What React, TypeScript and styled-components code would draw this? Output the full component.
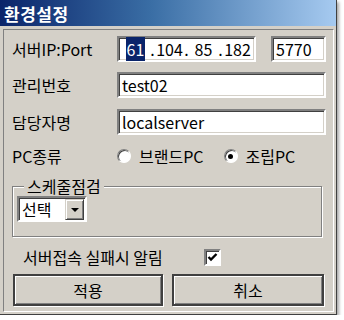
import React from "react";
import styled, { createGlobalStyle } from "styled-components";

const GlobalStyle = createGlobalStyle`
  * { box-sizing: border-box; }
  body {
    margin: 0;
    background: #ffffff;
    font-family: "Noto Sans CJK KR", "Liberation Sans", sans-serif;
  }
`;

const face = "#D4D0C8";

const Window = styled.div`
  width: 337px;
  height: 315px;
  background: ${face};
  display: flex;
  flex-direction: column;
  box-shadow: 2px 2px 3px rgba(0, 0, 0, 0.35);
  border-right: 1px solid #404040;
  border-bottom: 1px solid #404040;
`;

const TitleBar = styled.div`
  height: 26px;
  flex: none;
  display: flex;
  align-items: center;
  padding-left: 4px;
  background: linear-gradient(to right, #0a246a 0%, #3a6ea5 45%, #a6caf0 100%);
  color: #ffffff;
  font-size: 17px;
  font-weight: bold;
  letter-spacing: 0.5px;
`;

const Body = styled.div`
  flex: 1;
  padding: 3px 2px 2px 3px;
  display: flex;
`;

const Panel = styled.div`
  flex: 1;
  border: 1px solid;
  border-color: #808080 #ffffff #ffffff #808080;
  padding: 6px 6px 0 8px;
  display: flex;
  flex-direction: column;
  font-size: 16px;
  color: #000000;
`;

const Row = styled.div<{ $top: number }>`
  display: flex;
  align-items: center;
  height: 26px;
  margin-top: ${(p) => p.$top}px;
`;

const Label = styled.div`
  width: 105px;
  flex: none;
  white-space: nowrap;
`;

const Field = styled.div<{ $width?: number }>`
  height: 26px;
  width: ${(p) => (p.$width ? `${p.$width}px` : "209px")};
  flex: none;
  background: #ffffff;
  border: 2px solid;
  border-color: #808080 #ffffff #ffffff #808080;
  box-shadow: inset 1px 1px #404040, inset -1px -1px ${face};
  display: flex;
  align-items: center;
  padding-left: 3px;
  font-size: 16px;
  white-space: nowrap;
`;

const IpField = styled(Field)`
  padding-left: 2px;
`;

const Octet = styled.span`
  width: 29px;
  flex: none;
  text-align: center;
`;

const Dot = styled.span`
  width: 5px;
  flex: none;
  text-align: center;
`;

const Selected = styled.span`
  background: #0a246a;
  color: #ffffff;
  padding: 0 1px;
`;

const Spacer = styled.div`
  width: 15px;
  flex: none;
`;

const RadioItem = styled.label`
  display: flex;
  align-items: center;
  gap: 8px;
  margin-right: 20px;
`;

const RadioCircle = styled.span<{ $checked?: boolean }>`
  width: 14px;
  height: 14px;
  border-radius: 50%;
  background: #ffffff;
  border: 1px solid;
  border-color: #808080 #ffffff #ffffff #808080;
  box-shadow: inset 1px 1px #404040;
  display: flex;
  align-items: center;
  justify-content: center;

  &::after {
    content: "";
    width: 5px;
    height: 5px;
    border-radius: 50%;
    background: ${(p) => (p.$checked ? "#000000" : "transparent")};
  }
`;

const Group = styled.fieldset`
  margin: 8px 5px 0 0;
  padding: 1px 0 14px 4px;
  border: 1px solid #808080;
  box-shadow: inset 1px 1px #ffffff, 1px 1px #ffffff;
`;

const Legend = styled.legend`
  padding: 0 3px;
  margin-left: 7px;
  line-height: 18px;
  font-size: 16px;
  background: ${face};
`;

const Select = styled.div`
  width: 70px;
  height: 26px;
  display: flex;
  background: #ffffff;
  border: 2px solid;
  border-color: #808080 #ffffff #ffffff #808080;
  box-shadow: inset 1px 1px #404040;
`;

const SelectText = styled.div`
  flex: 1;
  display: flex;
  align-items: center;
  padding-left: 3px;
  font-size: 16px;
`;

const DropButton = styled.div`
  width: 19px;
  margin: 1px 1px 0 0;
  background: ${face};
  border: 1px solid;
  border-color: ${face} #404040 #404040 ${face};
  box-shadow: inset 1px 1px #ffffff, inset -1px -1px #808080;
  display: flex;
  align-items: center;
  justify-content: center;

  &::after {
    content: "";
    border-left: 4px solid transparent;
    border-right: 4px solid transparent;
    border-top: 4px solid #000000;
  }
`;

const CheckRow = styled.div`
  display: flex;
  align-items: center;
  height: 20px;
  margin: 10px 0 0 11px;
`;

const CheckText = styled.span`
  width: 181px;
  white-space: nowrap;
`;

const CheckBox = styled.span`
  width: 17px;
  height: 17px;
  background: #ffffff;
  border: 2px solid;
  border-color: #808080 #ffffff #ffffff #808080;
  box-shadow: inset 1px 1px #404040;
  display: flex;
  align-items: center;
  justify-content: center;
`;

const ButtonRow = styled.div`
  display: flex;
  gap: 9px;
  margin: 7px 0 0 1px;
`;

const Button = styled.button<{ $width: number }>`
  width: ${(p) => p.$width}px;
  height: 32px;
  background: ${face};
  border: 2px solid #404040;
  box-shadow: inset 1px 1px #ffffff, inset -1px -1px #808080, 1px 1px #ffffff;
  font-family: "Noto Sans CJK KR", "Liberation Sans", sans-serif;
  font-size: 16px;
  color: #000000;
  padding: 0;
`;

export default function App() {
  return (
    <>
      <GlobalStyle />
      <Window>
        <TitleBar>환경설정</TitleBar>
        <Body>
          <Panel>
            <Row $top={0}>
              <Label>서버IP:Port</Label>
              <IpField $width={139}>
                <Octet>
                  <Selected>61</Selected>
                </Octet>
                <Dot>.</Dot>
                <Octet>104</Octet>
                <Dot>.</Dot>
                <Octet>85</Octet>
                <Dot>.</Dot>
                <Octet>182</Octet>
              </IpField>
              <Spacer />
              <Field $width={55}>5770</Field>
            </Row>
            <Row $top={10}>
              <Label>관리번호</Label>
              <Field>test02</Field>
            </Row>
            <Row $top={11}>
              <Label>담당자명</Label>
              <Field>localserver</Field>
            </Row>
            <Row $top={8}>
              <Label>PC종류</Label>
              <RadioItem>
                <RadioCircle />
                브랜드PC
              </RadioItem>
              <RadioItem>
                <RadioCircle $checked />
                조립PC
              </RadioItem>
            </Row>
            <Group>
              <Legend>스케줄점검</Legend>
              <Select>
                <SelectText>선택</SelectText>
                <DropButton />
              </Select>
            </Group>
            <CheckRow>
              <CheckText>서버접속 실패시 알림</CheckText>
              <CheckBox>
                <svg width="11" height="11" viewBox="0 0 11 11">
                  <path d="M1.5 5 L4 7.5 L9.5 2" stroke="#000" strokeWidth="2.4" fill="none" />
                </svg>
              </CheckBox>
            </CheckRow>
            <ButtonRow>
              <Button $width={150}>적용</Button>
              <Button $width={152}>취소</Button>
            </ButtonRow>
          </Panel>
        </Body>
      </Window>
    </>
  );
}
